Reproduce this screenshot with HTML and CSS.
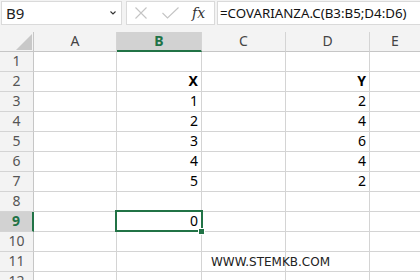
FILE: index.html
```html
<!DOCTYPE html>
<html>
<head>
<meta charset="utf-8">
<link rel="stylesheet" href="styles.css">
</head>
<body>
<div class="toolbar">
  <div class="namebox"><span class="name">B9</span><span class="chev"><svg width="8" height="6" viewBox="0 0 8 6"><path d="M1.5 1.5 L4 4 L6.5 1.5" fill="none" stroke="#333" stroke-width="1.1"/></svg></span></div>
  <div class="fxgroup">
    <svg class="ico" width="12" height="12" viewBox="0 0 12 12"><path d="M0.5 0.5 L11.5 11.5 M11.5 0.5 L0.5 11.5" stroke="#c4c4c4" stroke-width="1.1" fill="none"/></svg>
    <svg class="ico chk" width="17" height="12" viewBox="0 0 17 12"><path d="M0.5 6 L5.5 11 L16.5 0.5" stroke="#c4c4c4" stroke-width="1.1" fill="none"/></svg>
    <span class="fx">fx</span>
  </div>
  <div class="formula">=COVARIANZA.C(B3:B5;D4:D6)</div>
</div>
<div class="sheet">
  <div class="row hdr">
    <div class="c rh corner"><svg width="18" height="18" viewBox="0 0 18 18"><path d="M18 2 L18 18 L2 18 Z" fill="#c8c8c8"/></svg></div>
    <div class="c a">A</div><div class="c b sel">B</div><div class="c cc">C</div><div class="c d">D</div><div class="c e">E</div>
  </div>
  <div class="row"><div class="c rh">1</div><div class="c a"></div><div class="c b"></div><div class="c cc"></div><div class="c d"></div><div class="c e"></div></div>
  <div class="row"><div class="c rh">2</div><div class="c a"></div><div class="c b n bold">X</div><div class="c cc"></div><div class="c d n bold">Y</div><div class="c e"></div></div>
  <div class="row"><div class="c rh">3</div><div class="c a"></div><div class="c b n">1</div><div class="c cc"></div><div class="c d n">2</div><div class="c e"></div></div>
  <div class="row"><div class="c rh">4</div><div class="c a"></div><div class="c b n">2</div><div class="c cc"></div><div class="c d n">4</div><div class="c e"></div></div>
  <div class="row"><div class="c rh">5</div><div class="c a"></div><div class="c b n">3</div><div class="c cc"></div><div class="c d n">6</div><div class="c e"></div></div>
  <div class="row"><div class="c rh">6</div><div class="c a"></div><div class="c b n">4</div><div class="c cc"></div><div class="c d n">4</div><div class="c e"></div></div>
  <div class="row"><div class="c rh">7</div><div class="c a"></div><div class="c b n">5</div><div class="c cc"></div><div class="c d n">2</div><div class="c e"></div></div>
  <div class="row"><div class="c rh">8</div><div class="c a"></div><div class="c b"></div><div class="c cc"></div><div class="c d"></div><div class="c e"></div></div>
  <div class="row"><div class="c rh selr">9</div><div class="c a"></div><div class="c b n active">0<span class="handle"></span></div><div class="c cc"></div><div class="c d"></div><div class="c e"></div></div>
  <div class="row"><div class="c rh">10</div><div class="c a"></div><div class="c b"></div><div class="c cc"></div><div class="c d"></div><div class="c e"></div></div>
  <div class="row"><div class="c rh">11</div><div class="c a"></div><div class="c b"></div><div class="c cc wm">WWW.STEMKB.COM</div><div class="c d"></div><div class="c e"></div></div>
  <div class="row"><div class="c rh">12</div><div class="c a"></div><div class="c b"></div><div class="c cc"></div><div class="c d"></div><div class="c e"></div></div>
</div>
</body>
</html>
```
FILE: styles.css
```css
html, body { margin: 0; padding: 0; background: #fff; overflow: hidden; }
body { width: 420px; height: 280px; font-family: "Noto Sans", sans-serif; }

.toolbar {
  height: 32px; background: #f3f3f3; display: flex; align-items: flex-start;
  padding: 1px 0 0 1px; box-sizing: border-box; gap: 4px;
}
.namebox {
  width: 121px; height: 24px; box-sizing: border-box; background: #fff;
  border: 1px solid #dadada; display: flex; align-items: center; justify-content: space-between;
  padding: 0 4px 0 4px;
}
.name { font-size: 15px; color: #222; }
.chev { display: flex; }
.fxgroup {
  width: 89px; height: 24px; box-sizing: border-box; background: #fff;
  border: 1px solid #dadada; display: flex; align-items: center;
  padding-left: 8px;
}
.fxgroup .ico { display: block; }
.fxgroup .chk { margin-left: 15px; }
.fx { font-family: "DejaVu Serif", serif; font-style: italic; font-size: 14px; color: #333; margin-left: 13px; }
.formula {
  flex: 1; height: 24px; box-sizing: border-box; background: #fff;
  border: 1px solid #dadada; border-right: none; margin-left: -2px;
  font-size: 13.3px; color: #111; line-height: 22px; padding-left: 2px; white-space: nowrap;
}

.sheet { display: flex; flex-direction: column; }
.row { display: flex; height: 20px; }
.c {
  box-sizing: border-box; height: 20px; border-right: 1px solid #d4d4d4; border-bottom: 1px solid #d4d4d4;
  font-size: 14px; color: #000; line-height: 18px; flex: none;
}
.rh { width: 34px; background: #f3f3f3; color: #555; text-align: center; border-right-color: #c6c6c6; font-size: 14px; }
.a { width: 83px; }
.b { width: 85px; }
.cc { width: 84px; }
.d { width: 84px; }
.e { flex: 1; border-right: none; }

.hdr .c { background: #f3f3f3; color: #444; text-align: center; border-bottom-color: #c6c6c6; }
.hdr .corner { display: flex; align-items: flex-end; justify-content: flex-end; padding: 0 1px 1px 0; }
.hdr .sel { background: #d2d2d2; color: #217346; font-weight: bold; border-bottom: 2px solid #217346; }
.selr { background: #d2d2d2; color: #217346; font-weight: bold; border-right: 2px solid #217346; }

.n { text-align: right; padding-right: 3px; }
.bold { font-weight: bold; }

.active { position: relative; }
.active::before {
  content: ""; position: absolute; left: -2px; top: -2px; right: -2px; bottom: -1px;
  border: 2px solid #217346;
}
.handle {
  position: absolute; right: -4px; bottom: -4px; width: 5px; height: 5px; background: #217346;
  border: 1px solid #fff;
}
.wm { font-family: "DejaVu Sans", sans-serif; font-size: 12px; color: #222; padding-left: 9px; white-space: nowrap; overflow: visible; line-height: 20px; position: relative; z-index: 1; }
```
